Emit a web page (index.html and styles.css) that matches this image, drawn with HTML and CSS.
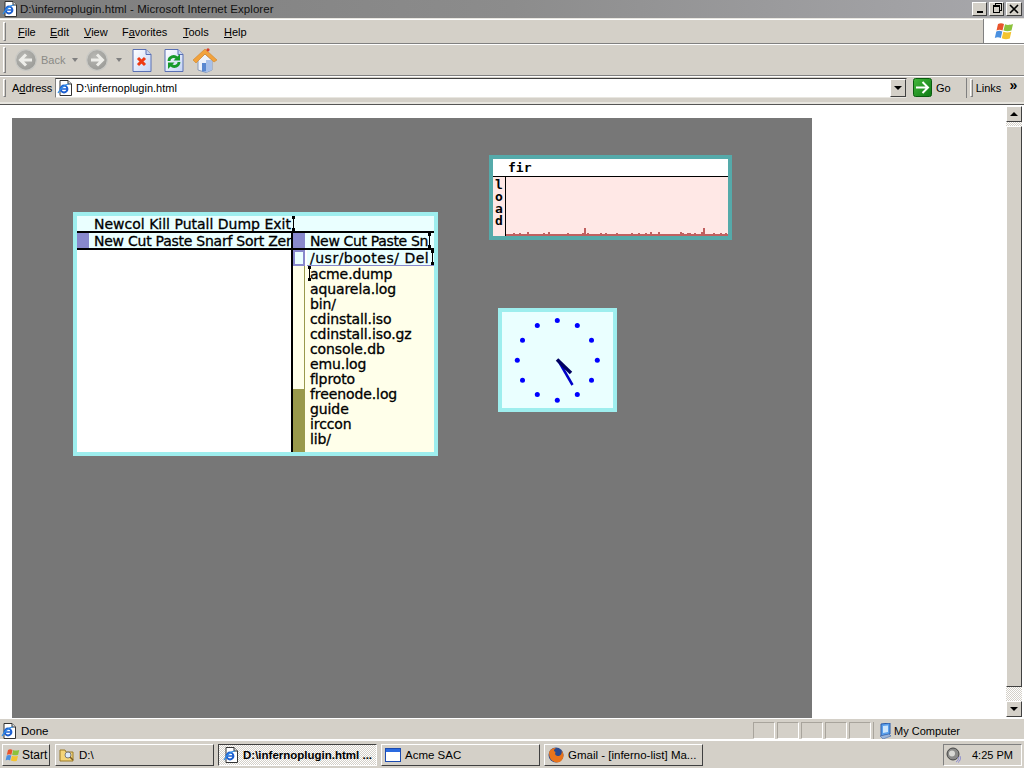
FILE: index.html
```html
<!DOCTYPE html>
<html lang="en">
<head>
    <meta charset="UTF-8">
    <title>D:\infernoplugin.html - Microsoft Internet Explorer</title>
    <link rel="stylesheet" href="styles.css">
</head>
<body>

<svg class="sprite" width="0" height="0">
    <defs>
        <radialGradient id="grayBall" cx="40%" cy="35%" r="75%">
            <stop offset="0" stop-color="#b8b8b4"/>
            <stop offset="1" stop-color="#989894"/>
        </radialGradient>
        <linearGradient id="goGreen" x1="0" y1="0" x2="1" y2="1">
            <stop offset="0" stop-color="#46b83c"/>
            <stop offset="1" stop-color="#0d7a14"/>
        </linearGradient>
        <linearGradient id="paper" x1="0" y1="0" x2="1" y2="1">
            <stop offset="0" stop-color="#ffffff"/>
            <stop offset="1" stop-color="#c4d4f6"/>
        </linearGradient>
    </defs>
    <symbol id="ie-page" viewBox="0 0 16 16">
        <path d="M3 .5h8l3.500 3.500v11.500H3z" fill="#fff" stroke="#333"/>
        <path d="M11 .5V4h3.500" fill="#ddd" stroke="#333"/>
        <circle cx="7" cy="9" r="3.400" fill="none" stroke="#1c5fd0" stroke-width="2"/>
        <path d="M4 9h6" stroke="#1c5fd0" stroke-width="1.500"/>
        <path d="M1 13C3 9 8 4 12 4" fill="none" stroke="#2f8de8" stroke-width="1.200"/>
    </symbol>
    <symbol id="winflag" viewBox="0 0 20 19">
        <path d="M4 2c2-1 4-1 6 0L8.500 8.500c-2-1-4-1-6 0z" fill="#e8542c"/>
        <path d="M11 2.200c2 1 4 1 8-.2l-1.500 6.500c-3 1-5 1-8 0z" fill="#8cc23c"/>
        <path d="M2.300 9.500c2-1 4-1 6 0L6.800 16c-2-1-4-1-6 0z" fill="#4a90e0"/>
        <path d="M9.300 9.700c3 1 5 1 8 0L15.800 16.500c-3 1-5 1-8-.2z" fill="#f4c430"/>
    </symbol>
    <symbol id="ball-left" viewBox="0 0 22 22">
        <circle cx="11" cy="11" r="10.300" fill="url(#grayBall)" stroke="#c8c8c4" stroke-width="1.200"/>
        <path d="M17 11H6M11 5.500L5.500 11l5.500 5.500" fill="none" stroke="#eeeeea" stroke-width="3"/>
    </symbol>
    <symbol id="ball-right" viewBox="0 0 22 22">
        <circle cx="11" cy="11" r="10.300" fill="url(#grayBall)" stroke="#c8c8c4" stroke-width="1.200"/>
        <path d="M5 11h11M11 5.500l5.500 5.500-5.500 5.500" fill="none" stroke="#eeeeea" stroke-width="3"/>
    </symbol>
    <symbol id="stop" viewBox="0 0 20 23">
        <path d="M1 .5h13l5 5v17H1z" fill="url(#paper)" stroke="#5a70b4"/>
        <path d="M14 .5v5h5" fill="#c8d4f0" stroke="#5a70b4"/>
        <path d="M6 9l7 7M13 9l-7 7" stroke="#ee3a14" stroke-width="3"/>
    </symbol>
    <symbol id="refresh" viewBox="0 0 20 23">
        <path d="M1 .5h13l5 5v17H1z" fill="url(#paper)" stroke="#5a70b4"/>
        <path d="M14 .5v5h5" fill="#c8d4f0" stroke="#5a70b4"/>
        <path d="M5 12c0-4 5-6 8-3" fill="none" stroke="#169a2a" stroke-width="2.800"/>
        <path d="M16 5v6.500h-6.500z" fill="#169a2a"/>
        <path d="M15 13c0 4-5 6-8 3" fill="none" stroke="#169a2a" stroke-width="2.800"/>
        <path d="M4 20v-6.500h6.500z" fill="#169a2a"/>
    </symbol>
    <symbol id="home" viewBox="0 0 24 25">
        <path d="M5 12l7-6 7 6v10l-6 2.500-8-2.500z" fill="#eef2fa" stroke="#8a9ab8"/>
        <path d="M13 24.500V12h6v10z" fill="#a8c0e8"/>
        <path d="M9 15h4v8.500H9z" fill="#5a88d0"/>
        <path d="M0 12L12 1l12 11-3 2L12 6 3 15z" fill="#f2a23c" stroke="#d08428" stroke-width=".6"/>
        <circle cx="15" cy="1.800" r="1.600" fill="#d8402c"/>
    </symbol>
    <symbol id="go" viewBox="0 0 19 19">
        <rect x=".5" y=".5" width="18" height="18" rx="2" fill="url(#goGreen)" stroke="#0a5c10"/>
        <path d="M3 9.500h11M9.500 4l5.500 5.500L9.500 15" fill="none" stroke="#fff" stroke-width="2"/>
    </symbol>
    <symbol id="folder" viewBox="0 0 16 16">
        <path d="M1 3h5l1 2h7v9H1z" fill="#f4d478" stroke="#9a7a28"/>
        <circle cx="9" cy="8" r="3" fill="#dceafa" stroke="#7a7a7a"/>
        <path d="M11 10l3 3" stroke="#7a5a20" stroke-width="1.500"/>
    </symbol>
    <symbol id="appwin" viewBox="0 0 16 16">
        <rect x=".5" y="1.500" width="15" height="13" fill="#fff" stroke="#1a4ab0"/>
        <rect x="1" y="2" width="14" height="3" fill="#2a6ae0"/>
    </symbol>
    <symbol id="firefox" viewBox="0 0 16 16">
        <circle cx="8" cy="8" r="7.500" fill="#2a4a90"/>
        <path d="M1 6c0 6 4 9.500 8 9.500 4 0 6.500-3.500 6.500-7 0-2-1-4-2-5 1 3-1 6-4 5.500-2-.3-3-2-2-4C5 4 6 2 8 1 4 1 1.500 3 1 6z" fill="#e8741c"/>
    </symbol>
    <symbol id="speaker" viewBox="0 0 16 16">
        <circle cx="7" cy="7" r="6" fill="#8a8a88" stroke="#444"/>
        <circle cx="6" cy="6.500" r="3" fill="#d8d8d4"/>
        <path d="M12 10c1 2 0 4-2 5M14 9c1 3 0 5-2 6.500" fill="none" stroke="#8a8ad0"/>
    </symbol>
    <symbol id="computer" viewBox="0 0 16 16">
        <path d="M4 1l9-1v11l-9 2z" fill="#5aa0ec" stroke="#2a5aa8"/>
        <path d="M6 3l5-.6v6.600l-5 1z" fill="#cde6fc"/>
        <path d="M3 13l9-2 2 2-8 3z" fill="#9ab4d8" stroke="#2a5aa8" stroke-width=".5"/>
    </symbol>
</svg>

<div class="titlebar">
    <svg class="ico16 title-ico"><use href="#ie-page"/></svg>
    <span class="title-text">D:\infernoplugin.html - Microsoft Internet Explorer</span>
    <div class="winbtns">
        <button class="winbtn"><span class="glyph-min"></span></button>
        <button class="winbtn"><span class="glyph-max"></span></button>
        <button class="winbtn winbtn-close">
            <svg width="10" height="10"><path d="M1 1l8 8M9 1l-8 8" stroke="#000" stroke-width="1.600"/></svg>
        </button>
    </div>
</div>

<div class="menubar">
    <span class="handle"></span>
    <div class="menu">
        <span class="m-file"><u>F</u>ile</span>
        <span class="m-edit"><u>E</u>dit</span>
        <span class="m-view"><u>V</u>iew</span>
        <span class="m-fav">F<u>a</u>vorites</span>
        <span class="m-tools"><u>T</u>ools</span>
        <span><u>H</u>elp</span>
    </div>
    <div class="xp-logo"><svg width="20" height="19"><use href="#winflag"/></svg></div>
</div>

<div class="toolbar">
    <span class="handle"></span>
    <svg class="tb-ball"><use href="#ball-left"/></svg>
    <span class="back-label">Back</span>
    <span class="tb-arrow"></span>
    <svg class="tb-ball tb-forward"><use href="#ball-right"/></svg>
    <span class="tb-arrow tb-arrow-fwd"></span>
    <svg class="tb-page tb-stop"><use href="#stop"/></svg>
    <svg class="tb-page tb-refresh"><use href="#refresh"/></svg>
    <svg class="tb-home"><use href="#home"/></svg>
</div>

<div class="addressbar">
    <span class="handle"></span>
    <span class="addr-label">A<u>d</u>dress</span>
    <div class="addr-field">
        <svg class="ico16"><use href="#ie-page"/></svg>
        <span class="addr-text">D:\infernoplugin.html</span>
        <span class="addr-drop"><span class="arrow-down"></span></span>
    </div>
    <svg class="go-ico"><use href="#go"/></svg>
    <span class="go-label">Go</span>
    <span class="links-sep"></span>
    <span class="handle links-handle"></span>
    <span class="links-label">Links</span>
    <span class="links-more">»</span>
</div>

<div class="viewport">
    <div class="page">
        <div class="plugin">

            <div class="acme">
                <div class="acme-tag">
                    <span class="tag-text">Newcol Kill Putall Dump Exit</span>
                    <span class="cursor cursor-main"></span>
                </div>
                <div class="acme-cols">
                    <div class="col col-left">
                        <div class="col-tag">
                            <span class="purple-box"></span>
                            <span class="tag-text tag-fit">New Cut Paste Snarf Sort Zer</span>
                        </div>
                    </div>
                    <div class="col col-right">
                        <div class="col-tag">
                            <span class="purple-box"></span>
                            <span class="tag-text tag-clip">New Cut Paste Sn</span>
                            <span class="cursor cursor-col"></span>
                        </div>
                        <div class="win-tag">
                            <span class="win-box"></span>
                            <div class="win-tag-text">
                                <span class="tag-text tag-wide">/usr/bootes/ Del</span>
                                <span class="cursor cursor-win"></span>
                            </div>
                        </div>
                        <div class="win-main">
                            <div class="scroll"><div class="scroll-fill"></div></div>
                            <div class="files">
                                <span class="cursor cursor-body"></span>
                                <div>acme.dump</div>
                                <div>aquarela.log</div>
                                <div>bin/</div>
                                <div>cdinstall.iso</div>
                                <div>cdinstall.iso.gz</div>
                                <div>console.db</div>
                                <div>emu.log</div>
                                <div>flproto</div>
                                <div>freenode.log</div>
                                <div>guide</div>
                                <div>irccon</div>
                                <div>lib/</div>
                            </div>
                        </div>
                    </div>
                </div>
            </div>

            <div class="fir">
                <div class="fir-title">fir</div>
                <div class="fir-main">
                    <div class="fir-side">l<br>o<br>a<br>d</div>
                    <svg class="fir-graph" viewBox="0 0 222 59" width="222" height="59">
                        <path fill="#c06060" d="M0 57h222v2H0z
                            M7 56h2v1H7z M13 56h2v1h-2z M21 55h2v2h-2z M37 56h2v1h-2z M42 55h2v2h-2z
                            M61 56h2v1h-2z M76 56h2v1h-2z M78 51h2v6h-2z M81 56h2v1h-2z M94 56h2v1h-2z
                            M99 56h2v1h-2z M110 56h2v1h-2z M125 56h2v1h-2z M132 56h2v1h-2z M139 56h2v1h-2z
                            M144 55h2v2h-2z M152 55h2v2h-2z M174 55h2v2h-2z M176 56h2v1h-2z M181 56h4v1h-4z
                            M188 56h2v1h-2z M195 55h2v2h-2z M197 51h2v6h-2z M207 56h2v1h-2z M214 56h2v1h-2z M219 56h2v1h-2z"/>
                    </svg>
                </div>
            </div>

            <div class="clock">
                <svg class="clock-face" viewBox="502 312 111 96" width="111" height="96">
                    <g fill="#0000ff">
                        <circle cx="557.300" cy="320.500" r="2.500"/>
                        <circle cx="577.300" cy="325.500" r="2.500"/>
                        <circle cx="591.500" cy="340.300" r="2.500"/>
                        <circle cx="597.300" cy="360.300" r="2.500"/>
                        <circle cx="591.500" cy="380.300" r="2.500"/>
                        <circle cx="577.300" cy="394.500" r="2.500"/>
                        <circle cx="557.300" cy="400.300" r="2.500"/>
                        <circle cx="537.300" cy="394.500" r="2.500"/>
                        <circle cx="522.500" cy="380.300" r="2.500"/>
                        <circle cx="517.300" cy="360.300" r="2.500"/>
                        <circle cx="522.500" cy="340.300" r="2.500"/>
                        <circle cx="537.300" cy="325.500" r="2.500"/>
                    </g>
                    <path d="M558 360L572.500 385" stroke="#0000c8" stroke-width="2.500"/>
                    <path d="M557 359.500L571 373" stroke="#000060" stroke-width="3.500"/>
                </svg>
            </div>

        </div>
    </div>
    <div class="vscroll">
        <span class="sb-btn"><span class="arrow-up"></span></span>
        <span class="sb-track sb-track-top"></span>
        <span class="sb-thumb"></span>
        <span class="sb-track"></span>
        <span class="sb-btn"><span class="arrow-down"></span></span>
    </div>
</div>

<div class="statusbar">
    <svg class="ico16 status-ico"><use href="#ie-page"/></svg>
    <span class="status-main">Done</span>
    <span class="status-cell"></span>
    <span class="status-cell"></span>
    <span class="status-cell"></span>
    <span class="status-cell"></span>
    <span class="status-cell"></span>
    <div class="status-zone">
        <svg class="ico16"><use href="#computer"/></svg>
        <span>My Computer</span>
    </div>
</div>

<div class="taskbar">
    <button class="start-btn"><svg width="15" height="15"><use href="#winflag"/></svg>Start</button>
    <button class="task"><svg class="ico16"><use href="#folder"/></svg><span>D:\</span></button>
    <button class="task task-active"><svg class="ico16"><use href="#ie-page"/></svg><span>D:\infernoplugin.html ...</span></button>
    <button class="task"><svg class="ico16"><use href="#appwin"/></svg><span>Acme SAC</span></button>
    <button class="task"><svg class="ico16"><use href="#firefox"/></svg><span>Gmail - [inferno-list] Ma...</span></button>
    <div class="tray">
        <svg class="ico16"><use href="#speaker"/></svg>
        <span class="tray-time">4:25 PM</span>
    </div>
</div>

</body>
</html>
```

FILE: styles.css
```css
html, body {
    margin: 0;
    padding: 0;
}

body {
    width: 1024px;
    height: 768px;
    overflow: hidden;
    display: flex;
    flex-direction: column;
    background-color: #d4d0c8;
    color: #000;
    font-family: "Liberation Sans", Arial, sans-serif;
    font-size: 11px;
}

.sprite {
    position: absolute;
}

.ico16 {
    width: 16px;
    height: 16px;
    flex: none;
}

button {
    font: inherit;
    color: inherit;
    padding: 0;
}

/* title */
.titlebar {
    height: 18px;
    display: flex;
    align-items: center;
    padding-left: 2px;
    background: linear-gradient(90deg, #7e7e7e, #8c8c8c 50%, #a8a8ac);
    border-bottom: 1px solid #e8e6e0;
}

.title-ico {
    margin-right: 2px;
}

.title-text {
    color: #111;
    font-size: 11.500px;
    letter-spacing: .06px;
}

.winbtns {
    margin-left: auto;
    display: flex;
    gap: 2px;
    padding-right: 2px;
}

.winbtn {
    width: 15px;
    height: 14px;
    display: flex;
    align-items: center;
    justify-content: center;
    background-color: #d4d0c8;
    border: 1px solid;
    border-color: #fff #404040 #404040 #fff;
}

.winbtn-close {
    width: 16px;
}

.glyph-min {
    width: 6px;
    height: 2px;
    margin-top: 6px;
    background-color: #000;
}

.glyph-max {
    width: 5px;
    height: 5px;
    border: 1px solid #000;
    border-top-width: 2px;
    box-shadow: 2px -2px 0 -1px #d4d0c8, 2px -2px 0 0 #000;
}

/* bars */
.menubar, .toolbar, .addressbar {
    display: flex;
    align-items: center;
    position: relative;
}

.handle {
    width: 1px;
    border: 1px solid;
    border-color: #fff #808080 #808080 #fff;
    flex: none;
    margin-left: 3px;
}

.menubar {
    height: 24px;
    border-bottom: 1px solid #808080;
    box-shadow: inset 0 1px 0 #fff;
}

.menubar .handle { height: 17px; }

.menu {
    display: flex;
    margin-left: 12px;
    margin-top: 2px;
}

.m-file { width: 32px; }
.m-edit { width: 34px; }
.m-view { width: 38px; }
.m-fav { width: 61px; }
.m-tools { width: 41px; }

.xp-logo {
    margin-left: auto;
    width: 41px;
    height: 24px;
    display: flex;
    align-items: center;
    justify-content: center;
    background-color: #fff;
    border-left: 1px solid #808080;
    box-sizing: border-box;
}

.toolbar {
    height: 30px;
    border-top: 1px solid #fff;
    border-bottom: 1px solid #808080;
}

.toolbar .handle { height: 24px; }

.tb-ball {
    width: 22px;
    height: 22px;
    margin-left: 9px;
}

.tb-forward { margin-left: 8px; }

.back-label {
    color: #8a8a86;
    margin-left: 4px;
    width: 31px;
}

.tb-arrow {
    width: 0;
    height: 0;
    border-left: 3.500px solid transparent;
    border-right: 3.500px solid transparent;
    border-top: 4px solid #808080;
}

.tb-arrow-fwd { margin-left: 8px; }

.tb-page {
    width: 20px;
    height: 23px;
}

.tb-stop { margin-left: 10px; }
.tb-refresh { margin-left: 12px; }

.tb-home {
    width: 24px;
    height: 25px;
    margin-left: 9px;
}

.addressbar {
    height: 21px;
    border-top: 1px solid #fff;
}

.addressbar .handle { height: 16px; }

.addr-label {
    width: 43px;
    margin-left: 6px;
}

.addr-field {
    width: 852px;
    height: 20px;
    box-sizing: border-box;
    display: flex;
    align-items: center;
    background-color: #fff;
    border: 1px solid;
    border-color: #404040 #d4d0c8 #e8e6e0 #808080;
    padding-left: 1px;
}

.addr-text {
    margin-left: 3px;
}

.addr-drop {
    margin-left: auto;
    width: 16px;
    height: 18px;
    box-sizing: border-box;
    display: flex;
    align-items: center;
    justify-content: center;
    background-color: #d4d0c8;
    border: 1px solid;
    border-color: #fff #404040 #404040 #fff;
}

.arrow-down {
    width: 0;
    height: 0;
    border-left: 4px solid transparent;
    border-right: 4px solid transparent;
    border-top: 4px solid #000;
}

.arrow-up {
    width: 0;
    height: 0;
    border-left: 4px solid transparent;
    border-right: 4px solid transparent;
    border-bottom: 4px solid #000;
}

.go-ico {
    width: 19px;
    height: 19px;
    margin-left: 6px;
}

.go-label {
    margin-left: 4px;
}

.links-sep {
    width: 1px;
    height: 20px;
    margin-left: 15px;
    background-color: #808080;
}

.links-handle { margin-left: 3px; }

.links-label {
    margin-left: 3px;
}

.links-more {
    margin-left: 8px;
    font-size: 14px;
    font-weight: bold;
    line-height: 12px;
    margin-top: -6px;
}

/* page */
.viewport {
    height: 614px;
    flex: none;
    margin-top: 6px;
    display: flex;
    background-color: #fff;
    border-top: 1px solid #555;
    box-shadow: 0 -2px 0 #e8e6e0;
    box-sizing: border-box;
}

.page {
    flex: 1;
    padding: 13px 0 0 12px;
}

.plugin {
    width: 800px;
    height: 600px;
    position: relative;
    background-color: #777;
}

.vscroll {
    width: 16px;
    margin: 1px 2px 1px 0;
    display: flex;
    flex-direction: column;
}

.sb-btn {
    height: 16px;
    flex: none;
    box-sizing: border-box;
    display: flex;
    align-items: center;
    justify-content: center;
    background-color: #d4d0c8;
    border: 1px solid;
    border-color: #fff #404040 #404040 #fff;
}

.sb-track {
    flex: 1;
    background-color: #ece9e3;
    background-image: repeating-conic-gradient(#d4d0c8 0 25%, #fff 0 50%);
    background-size: 2px 2px;
}

.sb-track-top {
    flex: none;
    height: 4px;
}

.sb-thumb {
    height: 561px;
    flex: none;
    box-sizing: border-box;
    background-color: #d4d0c8;
    border: 1px solid;
    border-color: #fff #404040 #404040 #fff;
}

/* inferno windows, placed on the plugin canvas */
.acme, .fir, .clock {
    position: absolute;
    box-sizing: border-box;
    border: 4px solid #9eeeee;
}

.acme {
    left: 61px;
    top: 94px;
    width: 365px;
    height: 244px;
    display: flex;
    flex-direction: column;
    background-color: #fff;
    font-family: "DejaVu Sans", sans-serif;
    font-size: 14px;
    line-height: 17px;
    white-space: nowrap;
}

.tag-text {
    -webkit-text-stroke: 0.3px #000;
}

.tag-fit {
    letter-spacing: -.25px;
}

.tag-clip {
    letter-spacing: -.35px;
}

.tag-wide {
    letter-spacing: .5px;
}

.cursor {
    position: absolute;
    width: 1px;
    height: 15px;
    background-color: #000;
}

.cursor::before, .cursor::after {
    content: "";
    position: absolute;
    left: -1px;
    width: 3px;
    height: 3px;
    background-color: #000;
}

.cursor::before { top: 0; }
.cursor::after { bottom: 0; }

.acme-tag {
    height: 15px;
    flex: none;
    position: relative;
    padding-left: 17px;
    background-color: #eaffff;
    border-bottom: 2px solid #000;
}

.cursor-main { left: 216px; top: 0; }

.acme-cols {
    flex: 1;
    display: flex;
    min-height: 0;
}

.col {
    display: flex;
    flex-direction: column;
}

.col-left {
    width: 214px;
    flex: none;
    border-right: 2px solid #000;
}

.col-right {
    flex: 1;
    min-width: 0;
}

.col-tag {
    height: 15px;
    flex: none;
    display: flex;
    position: relative;
    overflow: hidden;
    background-color: #eaffff;
    border-bottom: 2px solid #000;
}

.purple-box {
    width: 12px;
    flex: none;
    margin-right: 5px;
    background-color: #8888cc;
}

.cursor-col { right: 4px; top: 0; }

.win-tag {
    height: 16px;
    flex: none;
    display: flex;
}

.win-box {
    width: 12px;
    flex: none;
    box-sizing: border-box;
    background-color: #eaffff;
    border: 2px solid #8888cc;
}

.win-tag-text {
    flex: 1;
    position: relative;
    margin-left: 2px;
    padding-left: 3px;
    overflow: hidden;
    background-color: #eaffff;
    border-bottom: 1px solid #8888cc;
}

.cursor-win { right: 1px; top: 0; }

.win-main {
    flex: 1;
    display: flex;
    min-height: 0;
    background-color: #ffffea;
}

.scroll {
    width: 11px;
    flex: none;
    display: flex;
    flex-direction: column;
    justify-content: flex-end;
    border-right: 1px solid #99994c;
}

.scroll-fill {
    height: 63px;
    background-color: #99994c;
}

.files {
    flex: 1;
    position: relative;
    padding: 1px 0 0 5px;
    line-height: 15px;
    letter-spacing: -.1px;
    -webkit-text-stroke: 0.3px #000;
}

.cursor-body { left: 4px; top: 0; }

.fir {
    left: 477px;
    top: 37px;
    width: 243px;
    height: 85px;
    display: flex;
    flex-direction: column;
    border-color: #55aaaa;
    background-color: #ffe8e6;
    font-family: "DejaVu Sans Mono", monospace;
    font-weight: bold;
    font-size: 13px;
}

.fir-title {
    height: 17px;
    flex: none;
    line-height: 17px;
    padding-left: 15px;
    background-color: #fff;
    border-bottom: 1px solid #000;
}

.fir-main {
    flex: 1;
    display: flex;
    min-height: 0;
}

.fir-side {
    width: 12px;
    flex: none;
    padding-top: 2px;
    line-height: 12px;
    text-align: center;
    border-right: 1px solid #000;
}

.fir-graph {
    display: block;
    flex: none;
}

.clock {
    left: 486px;
    top: 190px;
    width: 119px;
    height: 104px;
    background-color: #eaffff;
}

.clock-face {
    display: block;
}

/* status */
.statusbar {
    height: 22px;
    flex: none;
    display: flex;
    align-items: center;
    box-sizing: border-box;
    padding: 3px 2px 0 1px;
    gap: 2px;
    border-top: 1px solid #fff;
    border-bottom: 1px solid #fff;
}

.status-ico {
    margin-right: 2px;
}

.status-main {
    width: 730px;
    font-size: 11.500px;
}

.status-cell {
    width: 22px;
    height: 100%;
    box-sizing: border-box;
    border: 1px solid;
    border-color: #a8a49c #fff #fff #a8a49c;
}

.status-zone {
    flex: 1;
    height: 100%;
    display: flex;
    align-items: center;
    gap: 1px;
    padding-left: 3px;
    border-left: 1px solid #a8a49c;
}

/* taskbar */
.taskbar {
    flex: 1;
    display: flex;
    gap: 4px;
    padding: 3px 2px 2px;
    border-top: 1px solid #fff;
}

.start-btn, .task {
    display: flex;
    align-items: center;
    box-sizing: border-box;
    background-color: #d4d0c8;
    border: 1px solid;
    border-color: #fff #404040 #404040 #fff;
    text-align: left;
}

.start-btn {
    width: 48px;
    gap: 2px;
    padding-left: 2px;
    font-size: 12px;
    margin-right: 1px;
}

.task {
    width: 159px;
    gap: 4px;
    padding-left: 3px;
    font-size: 11.500px;
}

.task-active {
    padding-left: 4px;
    font-weight: bold;
    border-color: #404040 #fff #fff #404040;
    background-color: #ece9e3;
    background-image: repeating-conic-gradient(#d4d0c8 0 25%, #fff 0 50%);
    background-size: 2px 2px;
}

.tray {
    margin-left: auto;
    width: 79px;
    box-sizing: border-box;
    display: flex;
    align-items: center;
    padding-left: 2px;
    border: 1px solid;
    border-color: #808080 #fff #fff #808080;
}

.tray-time {
    margin-left: 10px;
}
```
